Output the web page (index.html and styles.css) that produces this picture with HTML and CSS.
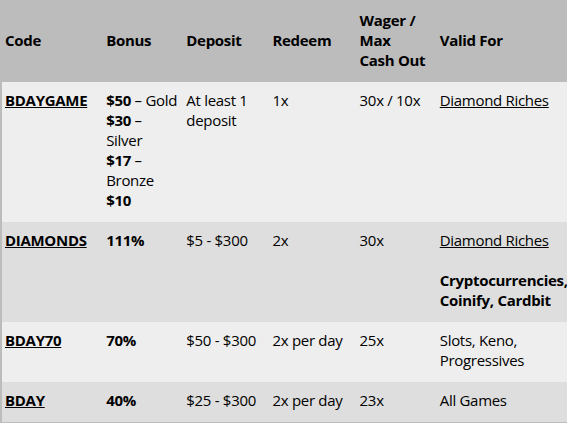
FILE: index.html
```html
<!DOCTYPE html>
<html>
<head>
<meta charset="utf-8">
<link rel="stylesheet" href="styles.css">
</head>
<body>
<table class="bonus-table">
  <colgroup>
    <col class="c-code"><col class="c-bonus"><col class="c-dep"><col class="c-red"><col class="c-wag"><col class="c-valid">
  </colgroup>
  <thead>
    <tr>
      <th>Code</th>
      <th>Bonus</th>
      <th>Deposit</th>
      <th>Redeem</th>
      <th>Wager /<br>Max<br>Cash Out</th>
      <th>Valid For</th>
    </tr>
  </thead>
  <tbody>
    <tr class="odd">
      <td><a class="code" href="#">BDAYGAME</a></td>
      <td><b>$50</b> – Gold<br><b>$30</b> –<br>Silver<br><b>$17</b> –<br>Bronze<br><b>$10</b></td>
      <td>At least 1 deposit</td>
      <td>1x</td>
      <td>30x / 10x</td>
      <td><a class="game" href="#">Diamond Riches</a></td>
    </tr>
    <tr class="even">
      <td><a class="code" href="#">DIAMONDS</a></td>
      <td><b>111%</b></td>
      <td>$5 - $300</td>
      <td>2x</td>
      <td>30x</td>
      <td><a class="game" href="#">Diamond Riches</a><br><br><b>Cryptocurrencies, Coinify, Cardbit</b></td>
    </tr>
    <tr class="odd">
      <td><a class="code" href="#">BDAY70</a></td>
      <td><b>70%</b></td>
      <td>$50 - $300</td>
      <td>2x per day</td>
      <td>25x</td>
      <td>Slots, Keno, Progressives</td>
    </tr>
    <tr class="even">
      <td><a class="code" href="#">BDAY</a></td>
      <td><b>40%</b></td>
      <td>$25 - $300</td>
      <td>2x per day</td>
      <td>23x</td>
      <td>All Games</td>
    </tr>
  </tbody>
</table>
</body>
</html>
```

FILE: styles.css
```css
html, body {
  margin: 0;
  padding: 0;
  background: #eeeeee;
}
body {
  font-family: "Open Sans", "Liberation Sans", sans-serif;
  font-size: 15px;
  line-height: 20px;
  letter-spacing: -0.3px;
  color: #000;
  overflow: hidden;
}
.bonus-table {
  border-collapse: collapse;
  table-layout: fixed;
  width: 567px;
  border-left: 2px solid #bcbcbc;
  border-bottom: 2px solid #bcbcbc;
}
.c-code { width: 100px; }
.c-bonus { width: 80px; }
.c-dep { width: 86px; }
.c-red { width: 87px; }
.c-wag { width: 80px; }
.c-valid { width: 132px; }
th, td {
  text-align: left;
  vertical-align: top;
  padding: 8px 0 12px 5px;
  white-space: normal;
  overflow: visible;
}
th:first-child, td:first-child { padding-left: 3px; }
thead tr { background: #bcbcbc; }
th {
  font-weight: 700;
  vertical-align: middle;
  height: 60px;
  padding-top: 10px;
  padding-bottom: 12px;
}
tr.odd { background: #eeeeee; }
tr.even { background: #dedede; }
td { height: 20px; }
a.code, a.game {
  color: #000;
  text-decoration: underline;
}
a.code { font-weight: 700; }
b { font-weight: 700; }
```
